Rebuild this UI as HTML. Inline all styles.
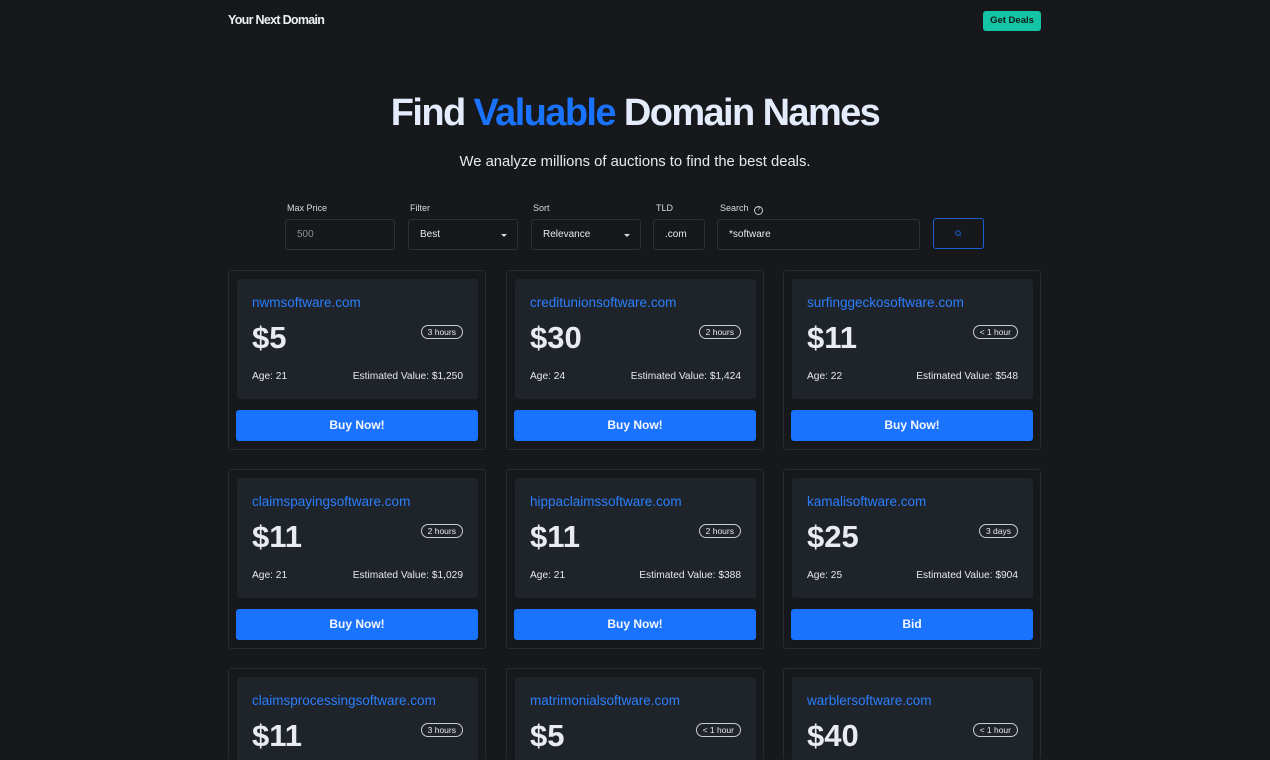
<!DOCTYPE html>
<html><head><meta charset="utf-8"><style>
*{box-sizing:border-box;margin:0;padding:0}
html,body{width:1270px;height:760px;overflow:hidden}
body{background:#16181c;font-family:"Liberation Sans",sans-serif;color:#e6e9ee;position:relative}
.abs{position:absolute}
.logo{left:228px;top:13px;font-size:12.5px;font-weight:bold;letter-spacing:-0.7px;color:#eef0f3}
.deals{left:983px;top:11px;width:58px;height:20px;background:#13c4a5;border-radius:3px;color:#0d1b18;font-size:9.5px;font-weight:bold;text-align:center;line-height:20px}
h1{position:absolute;left:0;width:1270px;top:92px;text-align:center;font-size:38px;font-weight:bold;letter-spacing:-1.6px;color:#e4ecfb}
h1 span{color:#1a73ff}
.sub{left:0;width:1270px;top:154px;text-align:center;font-size:14.8px;color:#e6e9ee}
.lbl{font-size:9px;color:#d8dbe0;top:203px}
.inp{top:219px;height:31px;border:1px solid #2c3038;border-radius:3px;background:#16181c;font-size:10px;line-height:30px;padding-left:11px;color:#e6e9ee}
.arrow{position:absolute;right:10px;top:14px;border-left:3px solid transparent;border-right:3px solid transparent;border-top:3px solid #d8dbe0}
.sbtn{left:933px;top:218px;width:51px;height:31px;border:1px solid #1a5fd0;border-radius:3px}
.card{width:258px;height:180px;border:1px solid #262a31;border-radius:3px}
.in{position:absolute;left:8px;top:8px;width:241px;height:120px;background:#1f232a;border-radius:3px}
.dn{position:absolute;left:15px;top:16px;font-size:13.5px;color:#2b7fff}
.pr{position:absolute;left:15px;top:41px;font-size:31px;font-weight:bold;color:#e8ecf2}
.tg{position:absolute;right:15px;top:46px;height:14px;border:1px solid #c9ccd2;border-radius:8px;font-size:8.5px;line-height:12px;padding:0 6px;color:#e6e9ee}
.ag{position:absolute;left:15px;top:92px;font-size:10.2px}
.ev{position:absolute;right:15px;top:92px;font-size:10.2px}
.bt{position:absolute;left:7px;top:139px;width:242px;height:31px;background:#1a73ff;border-radius:3px;text-align:center;line-height:31px;font-size:12px;font-weight:bold;color:#f4f7ff}
</style></head><body>
<div class="abs logo">Your Next Domain</div>
<div class="abs deals">Get Deals</div>
<h1>Find <span>Valuable</span> Domain Names</h1>
<div class="abs sub">We analyze millions of auctions to find the best deals.</div>
<div class="abs lbl" style="left:287px">Max Price</div>
<div class="abs lbl" style="left:410px">Filter</div>
<div class="abs lbl" style="left:533px">Sort</div>
<div class="abs lbl" style="left:656px">TLD</div>
<div class="abs lbl" style="left:720px">Search <span style="display:inline-block;width:9px;height:9px;border:1px solid #ccc;border-radius:50%;font-size:6px;text-align:center;line-height:7px;margin-left:3px;vertical-align:0">?</span></div>
<div class="abs inp" style="left:285px;width:110px;color:#8a8f97">500</div>
<div class="abs inp" style="left:408px;width:110px">Best<i class="arrow"></i></div>
<div class="abs inp" style="left:531px;width:110px">Relevance<i class="arrow"></i></div>
<div class="abs inp" style="left:653px;width:52px">.com</div>
<div class="abs inp" style="left:717px;width:203px">*software</div>
<div class="abs sbtn"><svg width="51" height="31" viewBox="0 0 51 31" style="position:absolute;left:-1px;top:-1px"><circle cx="25" cy="15" r="2.3" fill="none" stroke="#1a5fd0" stroke-width="1"/><path d="M26.7 16.7 28 18" stroke="#1a5fd0" stroke-width="1"/></svg></div>

<div class="abs card" style="left:228px;top:270px"><div class="in"><div class="dn">nwmsoftware.com</div><div class="pr">$5</div><div class="tg">3 hours</div><div class="ag">Age: 21</div><div class="ev">Estimated Value: $1,250</div></div><div class="bt">Buy Now!</div></div>
<div class="abs card" style="left:506px;top:270px"><div class="in"><div class="dn">creditunionsoftware.com</div><div class="pr">$30</div><div class="tg">2 hours</div><div class="ag">Age: 24</div><div class="ev">Estimated Value: $1,424</div></div><div class="bt">Buy Now!</div></div>
<div class="abs card" style="left:783px;top:270px"><div class="in"><div class="dn">surfinggeckosoftware.com</div><div class="pr">$11</div><div class="tg">&lt; 1 hour</div><div class="ag">Age: 22</div><div class="ev">Estimated Value: $548</div></div><div class="bt">Buy Now!</div></div>

<div class="abs card" style="left:228px;top:469px"><div class="in"><div class="dn">claimspayingsoftware.com</div><div class="pr">$11</div><div class="tg">2 hours</div><div class="ag">Age: 21</div><div class="ev">Estimated Value: $1,029</div></div><div class="bt">Buy Now!</div></div>
<div class="abs card" style="left:506px;top:469px"><div class="in"><div class="dn">hippaclaimssoftware.com</div><div class="pr">$11</div><div class="tg">2 hours</div><div class="ag">Age: 21</div><div class="ev">Estimated Value: $388</div></div><div class="bt">Buy Now!</div></div>
<div class="abs card" style="left:783px;top:469px"><div class="in"><div class="dn">kamalisoftware.com</div><div class="pr">$25</div><div class="tg">3 days</div><div class="ag">Age: 25</div><div class="ev">Estimated Value: $904</div></div><div class="bt">Bid</div></div>

<div class="abs card" style="left:228px;top:668px;height:92px;border-bottom:none"><div class="in"><div class="dn">claimsprocessingsoftware.com</div><div class="pr">$11</div><div class="tg">3 hours</div></div></div>
<div class="abs card" style="left:506px;top:668px;height:92px;border-bottom:none"><div class="in"><div class="dn">matrimonialsoftware.com</div><div class="pr">$5</div><div class="tg">&lt; 1 hour</div></div></div>
<div class="abs card" style="left:783px;top:668px;height:92px;border-bottom:none"><div class="in"><div class="dn">warblersoftware.com</div><div class="pr">$40</div><div class="tg">&lt; 1 hour</div></div></div>
</body></html>
